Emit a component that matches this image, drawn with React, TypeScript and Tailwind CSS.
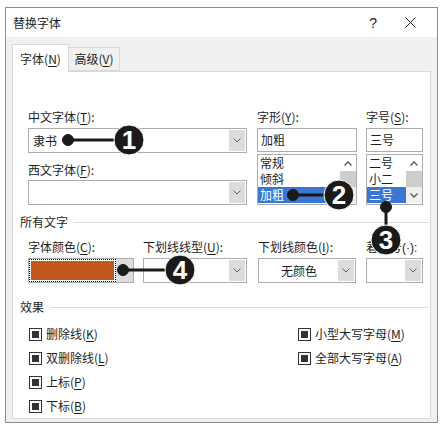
import type { ReactNode } from 'react'

function K({ c }: { c: string }) {
  return <span className="underline underline-offset-[2px] decoration-[1px]">{c}</span>
}

function Chevron() {
  return (
    <svg width="8" height="5" viewBox="0 0 8 5">
      <path d="M0.5 0.5 L4 4 L7.5 0.5" fill="none" stroke="#606060" strokeWidth="1" />
    </svg>
  )
}

function Arrow({ up }: { up?: boolean }) {
  return (
    <svg width="8" height="5" viewBox="0 0 8 5">
      <path
        d={up ? 'M0.5 4.5 L4 1 L7.5 4.5' : 'M0.5 0.5 L4 4 L7.5 0.5'}
        fill="none"
        stroke="#555"
        strokeWidth="1.3"
      />
    </svg>
  )
}

function Combo({ text, center, w }: { text?: string; center?: boolean; w: string }) {
  return (
    <div className={`${w} h-[25px] border border-[#adadad] bg-white flex p-[1px]`}>
      <div className={`flex-1 flex items-center px-[3px] ${center ? 'justify-center' : ''}`}>{text}</div>
      <div className="w-[16px] bg-[#dcdcdc] flex items-center justify-center">
        <Chevron />
      </div>
    </div>
  )
}

function ListBox({ items }: { items: string[] }) {
  return (
    <div className="mt-[2px] h-[51px] border border-[#adadad] bg-white flex">
      <div className="flex-1 flex flex-col">
        {items.map((it, i) => (
          <div
            key={it}
            className={`h-[16px] flex items-center pl-[2px] ${
              i === items.length - 1 ? 'bg-[#3a77d2] text-white' : ''
            }`}
          >
            {it}
          </div>
        ))}
      </div>
      <div className="w-[16px] flex flex-col">
        <div className="h-[16px] flex items-center justify-center">
          <Arrow up />
        </div>
        <div className="h-[16px] bg-[#cdcdcd]" />
        <div className="h-[16px] bg-[#f0f0f0] flex items-center justify-center">
          <Arrow />
        </div>
      </div>
    </div>
  )
}

function Section({ title }: { title: string }) {
  return (
    <div className="flex items-center h-[14px]">
      <span>{title}</span>
      <div className="flex-1 h-px bg-[#dcdcdc] ml-[6px]" />
    </div>
  )
}

function Check({ children }: { children: ReactNode }) {
  return (
    <div className="h-[24px] flex items-center">
      <div className="w-[13px] h-[13px] border border-[#333] bg-white flex items-center justify-center">
        <div className="w-[7px] h-[7px] bg-[#333]" />
      </div>
      <span className="ml-[4px]">{children}</span>
    </div>
  )
}

export default function App() {
  return (
    <div className="relative w-[443px] h-[431px] bg-white pt-[7px] pl-[5px] font-['Noto_Sans_CJK_SC',sans-serif] text-[12px] leading-[14px] text-[#1e1e1e]">
      <div className="w-[433px] h-[416px] border border-[#8e8e8e] flex flex-col">
        {/* title bar */}
        <div className="h-[29px] shrink-0 bg-white flex items-center pl-[7px]">
          <span>替换字体</span>
          <span className="ml-auto font-['Liberation_Sans',sans-serif] text-[14px]">?</span>
          <svg className="ml-[28px] mr-[21px]" width="11" height="11" viewBox="0 0 11 11">
            <path d="M0.5 0.5 L10.5 10.5 M10.5 0.5 L0.5 10.5" stroke="#222" strokeWidth="1" />
          </svg>
        </div>

        <div className="flex-1 bg-[#f0f0f0] pl-[6px] pr-[6px] pt-[7px] pb-[3px] flex flex-col">
          {/* tabs */}
          <div className="h-[27px] flex items-end">
            <div className="relative z-10 w-[57px] h-[28px] -mb-px bg-white border border-b-0 border-[#d9d9d9] flex items-center justify-center">
              字体(<K c="N" />)
            </div>
            <div className="w-[51px] h-[24px] bg-[#f0f0f0] border border-l-0 border-[#d9d9d9] flex items-center justify-center">
              高级(<K c="V" />)
            </div>
          </div>

          {/* panel */}
          <div className="flex-1 bg-white border border-[#d9d9d9] pt-[38px] pl-[7px] pr-px">
            <div className="flex pl-[8px]">
              <div className="w-[219px] flex flex-col">
                <div className="h-[14px]">
                  中文字体(<K c="T" />):
                </div>
                <div className="mt-[4px]">
                  <Combo w="w-[219px]" text="隶书" />
                </div>
                <div className="h-[14px] mt-[10px]">
                  西文字体(<K c="F" />):
                </div>
                <div className="mt-[3px]">
                  <Combo w="w-[219px]" />
                </div>
              </div>
              <div className="w-[100px] ml-[10px] flex flex-col">
                <div className="h-[14px]">
                  字形(<K c="Y" />):
                </div>
                <div className="mt-[4px] h-[24px] border border-[#adadad] flex items-center pl-[3px]">加粗</div>
                <ListBox items={['常规', '倾斜', '加粗']} />
              </div>
              <div className="w-[57px] ml-[9px] flex flex-col">
                <div className="h-[14px]">
                  字号(<K c="S" />):
                </div>
                <div className="mt-[4px] h-[24px] border border-[#adadad] flex items-center pl-[3px]">三号</div>
                <ListBox items={['二号', '小二', '三号']} />
              </div>
            </div>

            <div className="mt-[10px]">
              <Section title="所有文字" />
            </div>

            <div className="flex pl-[8px] mt-[11px]">
              <div className="w-[106px]">
                <div className="h-[14px]">
                  字体颜色(<K c="C" />):
                </div>
                <div className="mt-[4px] h-[25px] border border-[#adadad] flex">
                  <div className="flex-1 border border-dotted border-black p-[1px]">
                    <div className="w-full h-full bg-[#c0571f]" />
                  </div>
                  <div className="w-[17px] bg-[#dcdcdc] flex items-center justify-center">
                    <Chevron />
                  </div>
                </div>
              </div>
              <div className="w-[104px] ml-[9px]">
                <div className="h-[14px]">
                  下划线线型(<K c="U" />):
                </div>
                <div className="mt-[4px]">
                  <Combo w="w-[104px]" />
                </div>
              </div>
              <div className="w-[98px] ml-[11px]">
                <div className="h-[14px]">
                  下划线颜色(<K c="I" />):
                </div>
                <div className="mt-[4px]">
                  <Combo w="w-[98px]" text="无颜色" center />
                </div>
              </div>
              <div className="w-[57px] ml-[10px]">
                <div className="h-[14px] whitespace-nowrap">
                  着重号<span className="font-['Liberation_Sans',sans-serif]">(·):</span>
                </div>
                <div className="mt-[4px]">
                  <Combo w="w-[57px]" />
                </div>
              </div>
            </div>

            <div className="mt-[17px]">
              <Section title="效果" />
            </div>

            <div className="flex mt-[8px] pl-[9px]">
              <div className="w-[269px] flex flex-col">
                <Check>
                  删除线(<K c="K" />)
                </Check>
                <Check>
                  双删除线(<K c="L" />)
                </Check>
                <Check>
                  上标(<K c="P" />)
                </Check>
                <Check>
                  下标(<K c="B" />)
                </Check>
              </div>
              <div className="flex flex-col">
                <Check>
                  小型大写字母(<K c="M" />)
                </Check>
                <Check>
                  全部大写字母(<K c="A" />)
                </Check>
              </div>
            </div>
          </div>
        </div>
      </div>

      {/* callouts */}
      <svg className="absolute inset-0 pointer-events-none" width="443" height="431" viewBox="0 0 443 431">
        <g fill="#1a1a1a" stroke="#1a1a1a">
          <line x1="68" y1="140" x2="120" y2="140" strokeWidth="3" />
          <circle cx="68" cy="140" r="5.5" />
          <circle cx="129" cy="140" r="15" stroke="white" strokeWidth="1" />

          <line x1="293" y1="195" x2="330" y2="195" strokeWidth="3" />
          <circle cx="293" cy="195" r="5.5" />
          <circle cx="339" cy="195" r="15" stroke="white" strokeWidth="1" />

          <line x1="386" y1="207" x2="386" y2="230" strokeWidth="3" />
          <circle cx="386" cy="207" r="5.5" />
          <circle cx="386" cy="240" r="15" stroke="white" strokeWidth="1" />

          <line x1="123" y1="270" x2="170" y2="270" strokeWidth="3" />
          <circle cx="123" cy="270" r="5.5" />
          <circle cx="180" cy="270" r="15" stroke="white" strokeWidth="1" />
        </g>
        <g
          fill="white"
          fontFamily="Liberation Sans, sans-serif"
          fontWeight="bold"
          fontSize="26"
          textAnchor="middle"
        >
          <text x="129" y="149">1</text>
          <text x="339" y="204">2</text>
          <text x="386" y="249">3</text>
          <text x="180" y="279">4</text>
        </g>
      </svg>
    </div>
  )
}
